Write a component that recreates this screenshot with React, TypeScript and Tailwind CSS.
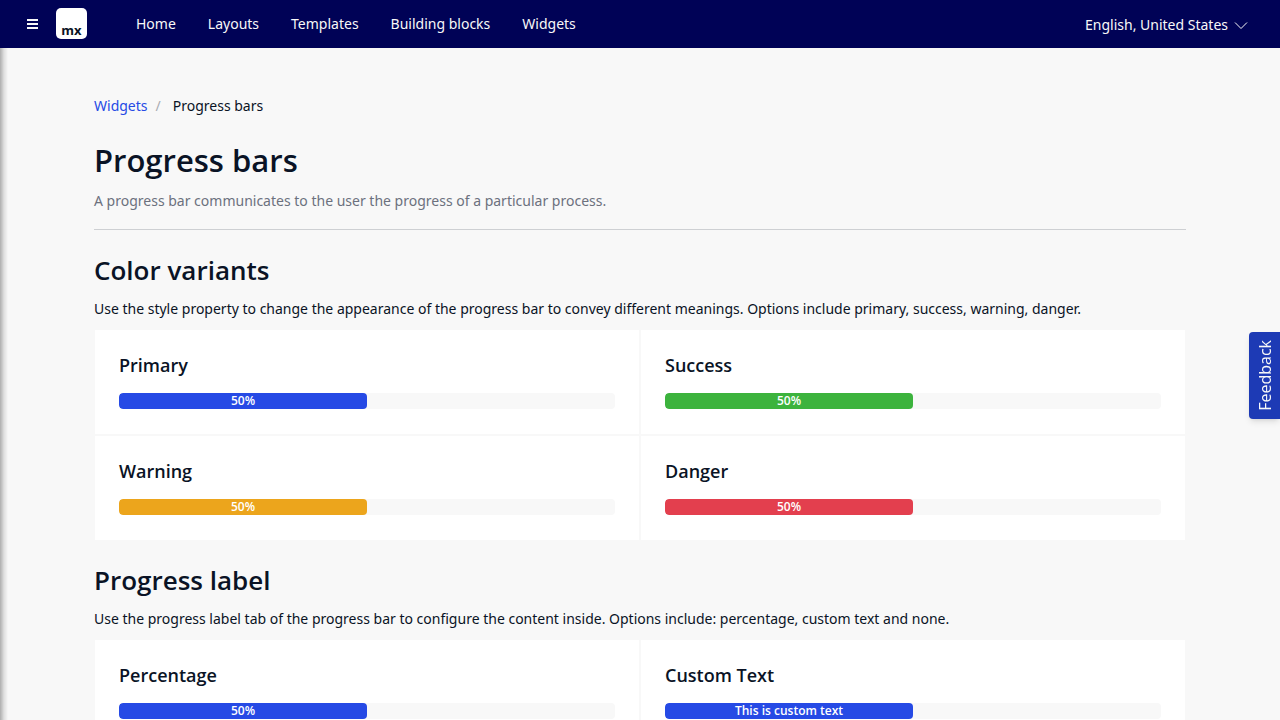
import React from "react";

const navItems = ["Home", "Layouts", "Templates", "Building blocks", "Widgets"];

type Bar = { title: string; label: string; value: number; color: string };

const colorVariants: Bar[] = [
  { title: "Primary", label: "50%", value: 50, color: "bg-[#264ae5]" },
  { title: "Success", label: "50%", value: 50, color: "bg-[#3cb33d]" },
  { title: "Warning", label: "50%", value: 50, color: "bg-[#eca51c]" },
  { title: "Danger", label: "50%", value: 50, color: "bg-[#e33f4e]" },
];

const labelVariants: Bar[] = [
  { title: "Percentage", label: "50%", value: 50, color: "bg-[#264ae5]" },
  { title: "Custom Text", label: "This is custom text", value: 50, color: "bg-[#264ae5]" },
];

function ProgressCard({ title, label, value, color }: Bar) {
  return (
    <article className="bg-white px-6 pt-[23px] pb-[25px]">
      <h3 className="mb-4 text-[18px] leading-6 font-semibold">{title}</h3>
      <div
        role="progressbar"
        aria-label={title}
        aria-valuenow={value}
        aria-valuemin={0}
        aria-valuemax={100}
        className="h-4 overflow-hidden rounded bg-[#f8f8f8]"
      >
        <div
          className={`h-4 rounded text-center text-[12px] leading-4 font-semibold text-white ${color}`}
          style={{ width: `${value}%` }}
        >
          {label}
        </div>
      </div>
    </article>
  );
}

function Section({ title, text, bars }: { title: string; text: string; bars: Bar[] }) {
  return (
    <section className="mt-6">
      <h2 className="text-[26px] leading-8 font-semibold">{title}</h2>
      <p className="mt-[13px] font-['Noto_Sans',sans-serif] text-[14px] leading-5">{text}</p>
      <div className="mt-[11px] grid grid-cols-2 gap-0.5 px-px">
        {bars.map((bar) => (
          <ProgressCard key={bar.title} {...bar} />
        ))}
      </div>
    </section>
  );
}

export default function App() {
  return (
    <div className="min-h-screen bg-[#f8f8f8] font-['Open_Sans',sans-serif] text-[#0a1325]">
      <header className="sticky top-0 z-20 flex h-12 items-center bg-[#000256] pr-8 pb-px pl-[26px] font-['Noto_Sans',sans-serif] text-[14px] leading-5 text-[#f8f8f8]">
        <button type="button" aria-label="Toggle menu" className="flex h-6 items-center">
          <svg width="12" height="12" viewBox="0 0 12 12" fill="currentColor" aria-hidden="true">
            <path d="M1 1h11v2H1zM1 5h11v2H1zM1 9h11v2H1z" />
          </svg>
        </button>
        <a
          href="#home"
          className="ml-[18px] flex size-[31px] items-end justify-center rounded-[5px] bg-white pb-px font-['Open_Sans',sans-serif] text-[13px] leading-4 font-bold text-[#0a1325]"
        >
          mx
        </a>
        <nav className="ml-[49px] flex gap-8">
          {navItems.map((item) => (
            <a key={item} href="#nav">
              {item}
            </a>
          ))}
        </nav>
        <button type="button" className="ml-auto flex items-center gap-1.5 pt-0.5">
          English, United States
          <svg width="14" height="14" viewBox="0 0 14 14" fill="none" stroke="currentColor" strokeWidth="1" aria-hidden="true">
            <path d="M1 4.5l6 6 6-6" />
          </svg>
        </button>
      </header>

      <div
        aria-hidden="true"
        className="fixed top-12 bottom-0 left-0 z-10 w-2 bg-linear-to-r from-black/30 via-black/10 to-transparent"
      />

      <main className="px-[94px] pt-12 pb-16">
        <nav aria-label="Breadcrumb" className="flex font-['Noto_Sans',sans-serif] text-[14px] leading-5">
          <a href="#widgets" className="text-[#264ae5]">
            Widgets
          </a>
          <span className="ml-2 text-[#a9acb3]">/</span>
          <span className="ml-3">Progress bars</span>
        </nav>
        <h1 className="mt-6 text-[31px] leading-10 font-semibold">Progress bars</h1>
        <p className="mt-[11px] border-b border-[#ced0d3] pb-[18px] font-['Noto_Sans',sans-serif] text-[14px] leading-5 text-[#6c717e]">
          A progress bar communicates to the user the progress of a particular process.
        </p>
        <Section
          title="Color variants"
          text="Use the style property to change the appearance of the progress bar to convey different meanings. Options include primary, success, warning, danger."
          bars={colorVariants}
        />
        <Section
          title="Progress label"
          text="Use the progress label tab of the progress bar to configure the content inside. Options include: percentage, custom text and none."
          bars={labelVariants}
        />
      </main>

      <button
        type="button"
        className="fixed top-[332px] right-0 z-20 flex h-[87px] w-[31px] items-center justify-center rounded-l bg-[#1d3ab5] text-[16px] text-[#f8f8f8] shadow-md"
      >
        <span className="rotate-180 [writing-mode:vertical-rl]">Feedback</span>
      </button>
    </div>
  );
}
